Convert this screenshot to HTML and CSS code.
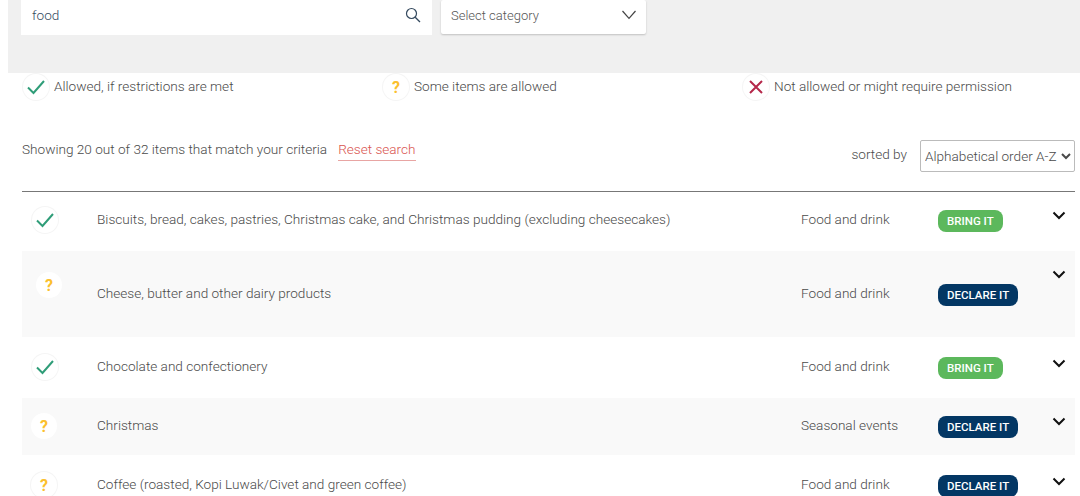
FILE: index.html
```html
<!DOCTYPE html>
<html lang="en">
<head>
<meta charset="utf-8">
<title>Items search</title>
<link rel="stylesheet" href="styles.css">
</head>
<body>
<section class="filters">
  <div class="search">
    <span class="search-text">food</span>
    <svg class="search-icon" width="16" height="16" viewBox="0 0 16 16"><circle cx="6.500" cy="6.500" r="5" fill="none" stroke="#34495e" stroke-width="1.2"/><path d="M10.200 10.200L15 15" stroke="#34495e" stroke-width="1.3" fill="none"/></svg>
  </div>
  <div class="category">
    <span>Select category</span>
    <svg width="16" height="10" viewBox="0 0 16 10"><path d="M1.500 1l6.500 7.400L14.500 1" fill="none" stroke="#444" stroke-width="1.200"/></svg>
  </div>
</section>
<section class="legend">
  <div class="legend-item">
    <span class="badge-icon"><svg width="20" height="16" viewBox="0 0 20 16"><path d="M2 8.500l5.500 5.500L18 2" fill="none" stroke="#2f9d78" stroke-width="2"/></svg></span>
    <span>Allowed, if restrictions are met</span>
  </div>
  <div class="legend-item">
    <span class="badge-icon q">?</span>
    <span>Some items are allowed</span>
  </div>
  <div class="legend-item">
    <span class="badge-icon"><svg width="16" height="16" viewBox="0 0 16 16"><path d="M2 2l12 12M14 2L2 14" fill="none" stroke="#b5284a" stroke-width="2"/></svg></span>
    <span>Not allowed or might require permission</span>
  </div>
</section>
<section class="toolbar">
  <div class="summary">
    <span>Showing 20 out of 32 items that match your criteria</span>
    <a class="reset" href="#">Reset search</a>
  </div>
  <div class="sort">
    <span class="sort-label">sorted by</span>
    <select class="sort-select"><option>Alphabetical order A-Z</option></select>
  </div>
</section>
<section class="list">
  <article class="row r1">
    <span class="badge-icon"><svg width="20" height="16" viewBox="0 0 20 16"><path d="M2 8.500l5.500 5.500L18 2" fill="none" stroke="#2f9d78" stroke-width="2"/></svg></span>
    <span class="name">Biscuits, bread, cakes, pastries, Christmas cake, and Christmas pudding (excluding cheesecakes)</span>
    <span class="cat">Food and drink</span>
    <span class="pill-cell"><span class="pill bring">BRING IT</span></span>
    <svg class="chev" width="14" height="9" viewBox="0 0 14 9"><path d="M1.500 1.500L7 7l5.500-5.500" fill="none" stroke="#111" stroke-width="2"/></svg>
  </article>
  <article class="row r2 alt">
    <span class="badge-icon q flush">?</span>
    <span class="name">Cheese, butter and other dairy products</span>
    <span class="cat">Food and drink</span>
    <span class="pill-cell"><span class="pill declare">DECLARE IT</span></span>
    <svg class="chev" width="14" height="9" viewBox="0 0 14 9"><path d="M1.500 1.500L7 7l5.500-5.500" fill="none" stroke="#111" stroke-width="2"/></svg>
  </article>
  <article class="row r3">
    <span class="badge-icon"><svg width="20" height="16" viewBox="0 0 20 16"><path d="M2 8.500l5.500 5.500L18 2" fill="none" stroke="#2f9d78" stroke-width="2"/></svg></span>
    <span class="name">Chocolate and confectionery</span>
    <span class="cat">Food and drink</span>
    <span class="pill-cell"><span class="pill bring">BRING IT</span></span>
    <svg class="chev" width="14" height="9" viewBox="0 0 14 9"><path d="M1.500 1.500L7 7l5.500-5.500" fill="none" stroke="#111" stroke-width="2"/></svg>
  </article>
  <article class="row r4 alt">
    <span class="badge-icon q flush">?</span>
    <span class="name">Christmas</span>
    <span class="cat">Seasonal events</span>
    <span class="pill-cell"><span class="pill declare">DECLARE IT</span></span>
    <svg class="chev" width="14" height="9" viewBox="0 0 14 9"><path d="M1.500 1.500L7 7l5.500-5.500" fill="none" stroke="#111" stroke-width="2"/></svg>
  </article>
  <article class="row r5">
    <span class="badge-icon q">?</span>
    <span class="name">Coffee (roasted, Kopi Luwak/Civet and green coffee)</span>
    <span class="cat">Food and drink</span>
    <span class="pill-cell"><span class="pill declare">DECLARE IT</span></span>
    <svg class="chev" width="14" height="9" viewBox="0 0 14 9"><path d="M1.500 1.500L7 7l5.500-5.500" fill="none" stroke="#111" stroke-width="2"/></svg>
  </article>
</section>
</body>
</html>
```
FILE: styles.css
```css
* { box-sizing: border-box; }
html, body { margin: 0; height: 496px; overflow: hidden; background: #fff; }
body { font-family: Roboto, "Liberation Sans", sans-serif; font-weight: 300; font-size: 13.6px; color: #4a4a4a; }

.filters { display: flex; align-items: flex-start; gap: 9px; height: 73px; margin-left: 8px; padding-left: 13px; background: #f0f0f0; }
.search { display: flex; align-items: center; justify-content: space-between; width: 411px; height: 35px; padding: 0 11px 5px; background: #fff; }
.search-text { color: #34495e; }
.category { display: flex; align-items: center; justify-content: space-between; width: 205px; height: 34px; padding: 0 9px 4px 10px; background: #fff; border-radius: 2px; box-shadow: 0 1px 2px rgba(0,0,0,.2); font-size: 13px; color: #555; }

.badge-icon { display: flex; align-items: center; justify-content: center; flex: none; width: 26px; height: 26px; border-radius: 50%; background: #fff; box-shadow: 0 0 0 1px #f5f5f5; }
.q { color: #fbc02d; font-size: 16px; font-weight: 700; }
.flush { box-shadow: none; }

.legend { display: flex; padding-left: 23px; height: 67px; padding-top: 1px; }
.legend-item { display: flex; flex: none; gap: 5px; width: 360px; line-height: 25px; }

.toolbar { display: flex; justify-content: space-between; height: 51px; padding: 0 5px 0 22px; }
.summary { display: flex; gap: 11px; align-items: flex-start; line-height: 19px; }
.reset { color: #d9534f; text-decoration: none; border-bottom: 1px solid #e8a5a3; height: 21px; }
.sort { display: flex; gap: 13px; align-items: flex-start; }
.sort-label { line-height: 29px; }
.sort-select { width: 155px; height: 32px; padding: 0 0 1px; font-family: inherit; font-weight: 300; font-size: 13.6px; color: #4a4a4a; background: #fff; border: 1px solid #bbb; border-radius: 2px; }

.list { margin: 0 5px 0 22px; border-top: 1px solid #777; }
.row { display: grid; grid-template-columns: 75px 704px 137px 1fr 32px; }
.row > * { align-self: start; }
.alt { background: #f9f9f9; }
.r1 { height: 59px; padding-top: 15px; }
.r2 { height: 86px; padding-top: 21px; }
.r3 { height: 61px; padding-top: 17px; }
.r4 { height: 57px; padding-top: 15px; }
.r5 { height: 60px; padding-top: 17px; }
.name, .cat { line-height: 25px; }
.row .badge-icon { margin-left: 10px; }
.row.r2 .badge-icon { margin-left: 14px; }
.row.r4 .badge-icon, .row.r5 .badge-icon { margin-left: 9px; }
.r2 .name, .r2 .cat { margin-top: 9px; }
.pill { display: inline-block; height: 22px; padding: 0 9px; border-radius: 8px; font-size: 11.500px; font-weight: 500; line-height: 22px; color: #fff; vertical-align: top; }
.pill-cell { display: block; padding-top: 3px; }
.r2 .pill-cell { padding-top: 12px; }
.bring { background: #5cb85c; }
.declare { background: #033764; }
.chev { margin-top: 4px; margin-left: 9px; }
.r2 .chev { margin-top: -2px; }
.r3 .chev, .r5 .chev { margin-top: 5px; }
```
